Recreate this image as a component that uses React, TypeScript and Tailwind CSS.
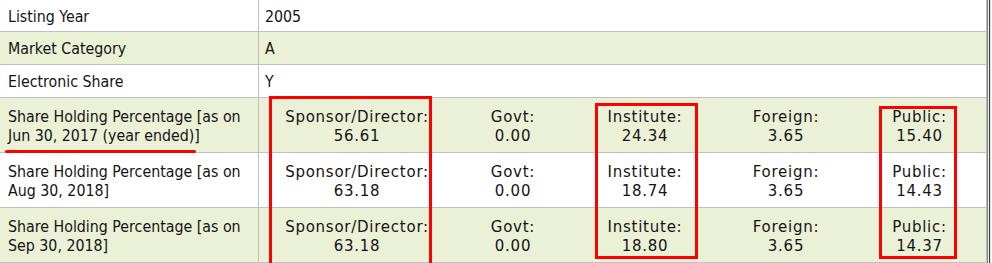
import React from "react";

interface Holding {
  label: string[];
  values: string[];
  shaded: boolean;
}

const basics = [
  { label: "Listing Year", value: "2005", shaded: false, h: "h-[32px]" },
  { label: "Market Category", value: "A", shaded: true, h: "h-[33px]" },
  { label: "Electronic Share", value: "Y", shaded: false, h: "h-[33px]" },
];

const heads = ["Sponsor/Director:", "Govt:", "Institute:", "Foreign:", "Public:"];
const colW = ["w-[196px]", "w-[116px]", "w-[148px]", "w-[134px]", "w-[133px]"];

const holdings: Holding[] = [
  {
    label: ["Share Holding Percentage [as on", "Jun 30, 2017 (year ended)]"],
    values: ["56.61", "0.00", "24.34", "3.65", "15.40"],
    shaded: true,
  },
  {
    label: ["Share Holding Percentage [as on", "Aug 30, 2018]"],
    values: ["63.18", "0.00", "18.74", "3.65", "14.43"],
    shaded: false,
  },
  {
    label: ["Share Holding Percentage [as on", "Sep 30, 2018]"],
    values: ["63.18", "0.00", "18.80", "3.65", "14.37"],
    shaded: true,
  },
];

export default function App() {
  return (
    <div
      className="relative flex h-[263px] w-[992px] overflow-hidden bg-white text-[15.8px] leading-[18.5px] text-[#141414]"
      style={{ fontFamily: '"DejaVu Sans Condensed", "DejaVu Sans", sans-serif' }}
    >
      <div className="w-[987px] border-r border-[#c0c0c0]">
        {basics.map((row) => (
          <div
            key={row.label}
            className={`flex ${row.h} border-b border-[#c0c0c0] ${row.shaded ? "bg-[#ebf1d6]" : "bg-white"}`}
          >
            <div className="w-[259px] shrink-0 border-r border-[#c0c0c0] pl-[8px] pt-[8px]">
              {row.label}
            </div>
            <div className="flex-1 pl-[6px] pt-[8px]">{row.value}</div>
          </div>
        ))}
        {holdings.map((row, i) => (
          <div
            key={i}
            className={`flex h-[55px] border-b border-[#c0c0c0] ${row.shaded ? "bg-[#ebf1d6]" : "bg-white"}`}
          >
            <div className="w-[259px] shrink-0 border-r border-[#c0c0c0] pl-[8px] pt-[10px]">
              {row.label.map((l) => (
                <div key={l}>{l}</div>
              ))}
            </div>
            <div
              className="flex flex-1 pt-[10px] text-[15px] leading-[18.5px] tracking-[0.75px]"
              style={{ fontFamily: '"DejaVu Sans", sans-serif' }}
            >
              {heads.map((h, j) => (
                <div key={h} className={`${colW[j]} shrink-0 text-center`}>
                  <div>{h}</div>
                  <div>{row.values[j]}</div>
                </div>
              ))}
            </div>
          </div>
        ))}
      </div>
      <div className="flex h-full">
        <div className="w-px bg-[#808080]" />
        <div className="w-px bg-[#f0f0f0]" />
        <div className="w-px bg-[#404040]" />
        <div className="w-px bg-[#e0e0e0]" />
      </div>

      <div className="absolute left-[269px] top-[96px] h-[200px] w-[163px] border-[3px] border-[#ff0000]" />
      <div className="absolute left-[595px] top-[103px] h-[156px] w-[103px] border-[3px] border-[#ff0000]" />
      <div className="absolute left-[879px] top-[106px] h-[153px] w-[78px] border-[3px] border-[#ff0000]" />
      <div className="absolute left-[5px] top-[150px] h-[3px] w-[191px] rounded-full bg-[#ff0000]" />
    </div>
  );
}
